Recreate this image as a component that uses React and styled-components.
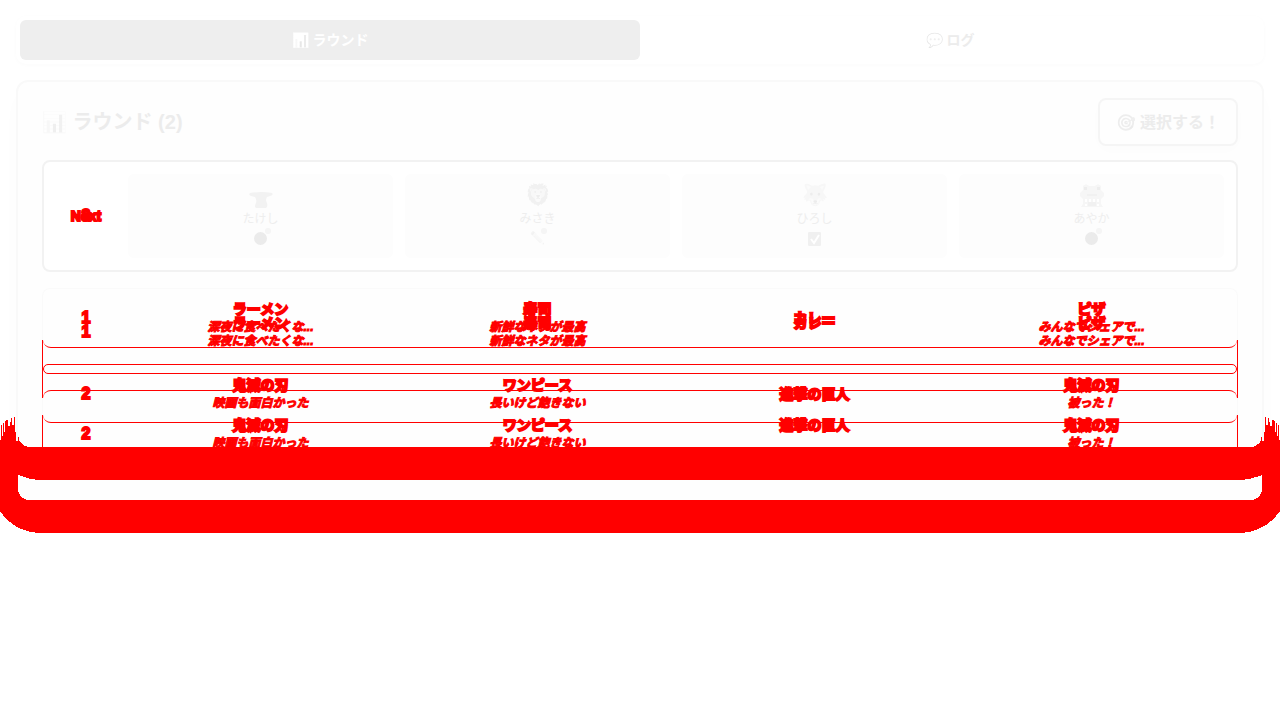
import React from "react";
import styled, { createGlobalStyle, css } from "styled-components";

const RED = "#ff0000";

const GlobalStyle = createGlobalStyle`
  * { box-sizing: border-box; }
  body {
    margin: 0;
    background: #ffffff;
    color: #ececec;
    font-family: "Liberation Sans", "Noto Sans CJK JP", sans-serif;
  }
  button { font: inherit; }
`;

const Page = styled.main`
  min-height: 100vh;
  padding: 16px;
`;

const TabBar = styled.nav`
  display: flex;
  padding: 4px;
  margin-bottom: 16px;
  border-radius: 10px;
  background: #ffffff;
  box-shadow: 0 1px 4px rgba(0, 0, 0, 0.02);
`;

const Tab = styled.button`
  flex: 1;
  height: 40px;
  padding: 0 0 2px;
  border: 0;
  border-radius: 6px;
  font-size: 14px;
  font-weight: 700;
  background: ${(p) => (p.$active ? "#eeeeee" : "transparent")};
  color: ${(p) => (p.$active ? "#ffffff" : "#ececec")};
`;

const Emoji = styled.span`
  font-size: ${(p) => p.$size || "inherit"};
  filter: ${(p) =>
    p.$light
      ? "grayscale(1) contrast(0.1) brightness(1.85)"
      : `grayscale(1) opacity(${p.$faint ? 0.08 : 0.1})`};
`;

const Panel = styled.section`
  position: relative;
  padding: 16px 24px 24px;
  border: 2px solid #f9f9f9;
  border-radius: 12px;
  background: #fefefe;
  box-shadow: 0 8px 32px rgba(0, 0, 0, 0.01);
`;

const Header = styled.header`
  display: flex;
  align-items: center;
  justify-content: space-between;
  margin-bottom: 14px;
`;

const Title = styled.h2`
  margin: 0;
  font-size: 20px;
  line-height: 28px;
`;

const SelectButton = styled.button`
  height: 48px;
  padding: 0 16px 2px;
  border: 2px solid #f5f5f5;
  border-radius: 8px;
  background: #fefefe;
  color: #ececec;
  font-size: 16px;
  font-weight: 700;
  box-shadow: 0 4px 16px rgba(0, 0, 0, 0.01);
`;

const columns = css`
  display: grid;
  grid-template-columns: 60px repeat(4, 1fr);
  column-gap: 12px;
`;

const NextCard = styled.div`
  ${columns}
  align-items: center;
  padding: 12px;
  margin-bottom: 16px;
  border: 2px solid #f2f2f2;
  border-radius: 8px;
  background: #ffffff;
`;

const trace = css`
  color: ${RED};
  font-weight: 700;
  -webkit-text-stroke: 1px ${RED};
`;

const NextLabel = styled.div`
  ${trace}
  -webkit-text-stroke-width: 2px;
  display: grid;
  place-items: center;
  font-size: 14px;
  line-height: 16px;
  > * { grid-area: 1 / 1; }
`;

const Count = styled.span`
  font-size: 16px;
`;

const Player = styled.div`
  display: flex;
  flex-direction: column;
  align-items: center;
  height: 84px;
  padding: 6px 8px;
  border-radius: 6px;
  background: #fdfdfd;
`;

const Avatar = styled.div`
  display: flex;
  align-items: center;
  height: 30px;
  line-height: 30px;
`;

const AvatarArt = styled.svg`
  width: 26px;
  height: 26px;
`;

const PlayerName = styled.div`
  font-size: 12px;
  line-height: 18px;
  color: #eeeeee;
`;

const Status = styled.div`
  position: relative;
  height: 20px;
  line-height: 18px;
`;

const Badge = styled.span`
  position: absolute;
  top: 0;
  right: -2px;
  width: 6px;
  height: 6px;
  border-radius: 3px;
  background: #f5f5f5;
`;

const Disc = styled.span`
  display: block;
  width: 13px;
  height: 13px;
  margin: 4px 2px;
  border-radius: 50%;
  background: #ebebeb;
`;

const CheckArt = styled.svg`
  display: block;
  width: 13px;
  height: 14px;
  margin: 4px 0;
`;

const Rounds = styled.div`
  position: relative;
  border: 1px solid #fafafa;
  border-bottom: 0;
  border-radius: 8px;
`;

const Layer = styled.div`
  ${(p) => p.$over && css`
    position: absolute;
    top: -1px;
    left: -1px;
    right: -1px;
    padding: 0 1px;
  `}
`;

const Round = styled.div`
  ${columns}
  ${trace}
  height: ${(p) => (p.$tall ? "86px" : "60px")};
  padding: 0 13px;
  & + & { margin-top: 16px; }
`;

const RoundNumber = styled.div`
  align-self: center;
  text-align: center;
  font-size: 16px;
  line-height: 20px;
  -webkit-text-stroke-width: 2px;
`;

const Answer = styled.div`
  align-self: ${(p) => (p.$tall ? "start" : "center")};
  padding-top: ${(p) => (p.$tall ? "25px" : "0")};
  text-align: center;
`;

const AnswerText = styled.div`
  font-size: 14px;
  line-height: 18px;
  -webkit-text-stroke-width: 2px;
`;

const Reason = styled.div`
  font-size: 12px;
  line-height: 18px;
  font-style: italic;
  font-weight: 700;
`;

const Outlines = styled(Layer)`
  padding: 52px 0 0;
`;

const Rail = styled.div`
  display: flex;
  flex-direction: column;
  gap: 16px;
  height: ${(p) => p.$height};
  margin-bottom: 17px;
  border: solid ${RED};
  border-width: 0 1px;
`;

const Edge = styled.div`
  height: 8px;
  border: solid ${RED};
  border-width: ${(p) => (p.$top ? "1px 0 0" : "0 0 1px")};
  border-radius: ${(p) => (p.$top ? "8px 8px 0 0" : "0 0 8px 8px")};
`;

const Capsule = styled.div`
  height: 10px;
  border: 1px solid ${RED};
  border-radius: 6px;
`;

const Band = styled.div`
  position: absolute;
  left: -18px;
  right: -18px;
  bottom: -32px;
  display: flex;
  height: 116px;
`;

const CornerArt = styled.svg`
  flex: none;
  width: 45px;
  height: 116px;
  transform: ${(p) => (p.$mirror ? "scaleX(-1)" : "none")};
`;

const Strips = styled.div`
  flex: 1;
  display: flex;
  flex-direction: column;
  gap: 20px;
  padding-top: 30px;
`;

const Strip = styled.div`
  height: 33px;
  background: ${RED};
`;

const players = [
  { name: "たけし", avatar: "anvil", status: "disc", badge: true },
  { name: "みさき", avatar: "🦁", status: "✏️", badge: true },
  { name: "ひろし", avatar: "🐺", status: "check" },
  { name: "あやか", avatar: "castle", status: "disc", badge: true },
];

const rounds = [
  [
    ["ラーメン", "深夜に食べたくな..."],
    ["寿司", "新鮮なネタが最高"],
    ["カレー"],
    ["ピザ", "みんなでシェアで..."],
  ],
  [
    ["鬼滅の刃", "映画も面白かった"],
    ["ワンピース", "長いけど飽きない"],
    ["進撃の巨人"],
    ["鬼滅の刃", "被った！"],
  ],
];

function PlayerAvatar({ kind }) {
  if (kind === "anvil") {
    return (
      <AvatarArt viewBox="0 0 26 26" aria-hidden="true">
        <path
          fill="#f2f2f2"
          d="M2 11Q7 10 13 10Q20 10 24 11Q26 13 22 14L19 15Q17 18 19 21Q20 25 18 26H8Q6 25 8 21Q9 18 7 15L3 14Q0 13 2 11Z"
        />
      </AvatarArt>
    );
  }
  if (kind === "castle") {
    return (
      <AvatarArt viewBox="0 0 26 26" aria-hidden="true">
        <path
          fill="#f6f6f6"
          d="M4 4L7 2L10 4H16L19 2L22 4V8L25 11V14L22 17V22L24 25H2L4 22V17L1 14V11L4 8Z"
        />
        <path fill="#ffffff" d="M6 17H8V20H6ZM18 17H20V20H18ZM10 17H12V20H10ZM14 17H16V20H14ZM6 22H8V24H6ZM18 22H20V24H18Z" />
        <path fill="#ededed" d="M5 5H8V8H5ZM18 5H21V8H18Z" />
        <path fill="#f1f1f1" d="M9 20H17V24H9ZM8 12H18V14H8Z" />
      </AvatarArt>
    );
  }
  return <Emoji $faint $size="21px">{kind}</Emoji>;
}

function StatusIcon({ kind }) {
  if (kind === "disc") return <Disc />;
  if (kind === "check") {
    return (
      <CheckArt viewBox="0 0 13 14" aria-hidden="true">
        <rect width="13" height="14" rx="1" fill="#f0f0f0" />
        <path d="M3 7L6 11L11 3" fill="none" stroke="#ffffff" strokeWidth="2" />
      </CheckArt>
    );
  }
  return <Emoji $faint $size="12px">{kind}</Emoji>;
}

function RoundRows({ tall }) {
  return rounds.map((answers, i) => (
    <Round key={i} $tall={tall}>
      <RoundNumber>{i + 1}</RoundNumber>
      {answers.map(([text, reason], j) => (
        <Answer key={j} $tall={tall}>
          <AnswerText>{text}</AnswerText>
          {reason && <Reason>{reason}</Reason>}
        </Answer>
      ))}
    </Round>
  ));
}

function Corner({ mirror }) {
  return (
    <CornerArt $mirror={mirror} viewBox="0 51 135 348" shapeRendering="crispEdges" aria-hidden="true">
      <path
        fill={RED}
        d="M0 120H3V75H6V108H9V68H12V96H15V63H18V60H24V78H30V66H33V54H36V75H42V52H45V96H48V123H54V111H57V123H60V126L66 132L75 138L84 141H135V240H114L90 236L72 231L54 225V270Q58 296 84 300H135V399H114Q40 392 0 333Z"
      />
    </CornerArt>
  );
}

export default function App() {
  return (
    <Page>
      <GlobalStyle />
      <TabBar>
        <Tab $active><Emoji $light>📊</Emoji> ラウンド</Tab>
        <Tab><Emoji>💬</Emoji> ログ</Tab>
      </TabBar>
      <Panel>
        <Header>
          <Title><Emoji>📊</Emoji> ラウンド (2)</Title>
          <SelectButton><Emoji>🎯</Emoji> 選択する！</SelectButton>
        </Header>
        <NextCard>
          <NextLabel><span>Next</span><Count>3</Count></NextLabel>
          {players.map((p) => (
            <Player key={p.name}>
              <Avatar><PlayerAvatar kind={p.avatar} /></Avatar>
              <PlayerName>{p.name}</PlayerName>
              <Status>
                <StatusIcon kind={p.status} />
                {p.badge && <Badge />}
              </Status>
            </Player>
          ))}
        </NextCard>
        <Rounds>
          <Layer><RoundRows tall /></Layer>
          <Layer $over><RoundRows /></Layer>
          <Outlines $over>
            <Rail $height="58px"><Edge /><Capsule /><Edge $top /></Rail>
            <Rail $height="32px"><Edge /></Rail>
          </Outlines>
        </Rounds>
        <Band>
          <Corner />
          <Strips><Strip /><Strip /></Strips>
          <Corner mirror />
        </Band>
      </Panel>
    </Page>
  );
}
